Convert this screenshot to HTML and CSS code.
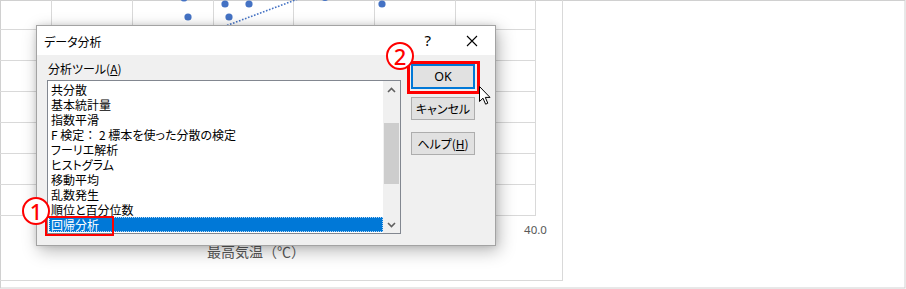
FILE: index.html
```html
<!DOCTYPE html>
<html lang="ja">
<head>
<meta charset="utf-8">
<title>データ分析</title>
<link rel="stylesheet" href="styles.css">
</head>
<body>
<div class="stage">
  <svg class="chart" width="906" height="289" viewBox="0 0 906 289">
    <rect x="0.5" y="0.5" width="904.5" height="287.5" fill="#fff" stroke="#d0d0d0"/>
    <g stroke="#d9d9d9" stroke-width="1">
      <line x1="562.5" y1="0" x2="562.5" y2="280.5"/>
      <line x1="0" y1="280.5" x2="563" y2="280.5"/>
      <line x1="0" y1="29.5" x2="536" y2="29.5"/>
      <line x1="0" y1="60.5" x2="536" y2="60.5"/>
      <line x1="0" y1="91.5" x2="536" y2="91.5"/>
      <line x1="0" y1="122.5" x2="536" y2="122.5"/>
      <line x1="0" y1="153.5" x2="536" y2="153.5"/>
      <line x1="0" y1="184.5" x2="536" y2="184.5"/>
      <line x1="0" y1="215.5" x2="536" y2="215.5"/>
      <line x1="51.5" y1="0" x2="51.5" y2="215"/>
      <line x1="132.5" y1="0" x2="132.5" y2="215"/>
      <line x1="213.5" y1="0" x2="213.5" y2="215"/>
      <line x1="293.5" y1="0" x2="293.5" y2="215"/>
      <line x1="374.5" y1="0" x2="374.5" y2="215"/>
      <line x1="455.5" y1="0" x2="455.5" y2="215"/>
      <line x1="535.5" y1="0" x2="535.5" y2="215"/>
    </g>
    <line x1="212" y1="31" x2="298" y2="-1" stroke="#4472c4" stroke-width="1.6" stroke-dasharray="1.6 1.6"/>
    <g fill="#4472c4">
      <circle cx="184" cy="-2" r="3.6"/>
      <circle cx="188" cy="17" r="3.6"/>
      <circle cx="225" cy="4" r="3.6"/>
      <circle cx="249" cy="4" r="3.6"/>
      <circle cx="229" cy="17" r="3.6"/>
      <circle cx="325" cy="-2.5" r="3.6"/>
      <circle cx="382" cy="4" r="3.6"/>
    </g>
    <text class="tick" x="535.5" y="234" text-anchor="middle">40.0</text>
    <text class="axis-title" x="207" y="257">最高気温（℃）</text>
  </svg>

  <div class="dialog">
    <div class="titlebar">
      <span class="title">データ分析</span>
      <span class="tb-buttons">
        <span class="tb-help">?</span>
        <svg class="tb-close" width="12" height="12" viewBox="0 0 12 12"><path d="M1 1L11 11M11 1L1 11" stroke="#000" stroke-width="1.1" fill="none"/></svg>
      </span>
    </div>
    <div class="body">
      <div class="left">
        <div class="label">分析ツール(<u>A</u>)</div>
        <div class="listbox">
          <ul class="items">
            <li>共分散</li>
            <li>基本統計量</li>
            <li>指数平滑</li>
            <li>F 検定<span class="fw">：</span> 2 標本を使った分散の検定</li>
            <li>フーリエ解析</li>
            <li>ヒストグラム</li>
            <li>移動平均</li>
            <li>乱数発生</li>
            <li>順位と百分位数</li>
            <li class="selected">回帰分析</li>
          </ul>
          <div class="scrollbar">
            <div class="sb-arrow"><svg width="9" height="6" viewBox="0 0 9 6"><path d="M1 5L4.5 1.5L8 5" stroke="#606060" stroke-width="1.6" fill="none"/></svg></div>
            <div class="sb-track"><div class="sb-thumb"></div></div>
            <div class="sb-arrow"><svg width="9" height="6" viewBox="0 0 9 6"><path d="M1 1L4.5 4.5L8 1" stroke="#606060" stroke-width="1.6" fill="none"/></svg></div>
          </div>
        </div>
      </div>
      <div class="right">
        <div class="btn btn-default">OK</div>
        <div class="btn btn-cancel">キャンセル</div>
        <div class="btn btn-help">ヘルプ(<u>H</u>)</div>
      </div>
    </div>
  </div>

  <div class="mark-box mark-ok"></div>
  <div class="mark-box mark-item"></div>
  <div class="badge badge-1">1</div>
  <div class="badge badge-2">2</div>
  <svg class="cursor" width="14" height="20" viewBox="0 0 14 20">
    <path d="M0.5 0.5L0.5 15.5L4 12.2L6.6 18.2L8.8 17.2L6.3 11.4L11 11.4Z" fill="#fff" stroke="#000" stroke-width="1" stroke-linejoin="miter"/>
  </svg>
</div>
</body>
</html>
```

FILE: styles.css
```css
* { box-sizing: border-box; }
html, body { margin: 0; padding: 0; background: #fff; }
body {
  font-family: "Noto Sans CJK JP", "Noto Sans", sans-serif;
  font-feature-settings: "palt";
}
.stage {
  position: relative;
  width: 906px;
  height: 289px;
  overflow: hidden;
}
.chart { display: block; }
.tick {
  font-family: "Noto Sans", "Liberation Sans", sans-serif;
  font-size: 11.5px;
  fill: #595959;
}
.axis-title {
  font-family: "Noto Sans CJK JP", sans-serif;
  font-feature-settings: normal;
  font-size: 14px;
  fill: #595959;
}
.fw { font-feature-settings: normal; }

.dialog {
  position: absolute;
  left: 36px;
  top: 25px;
  width: 460px;
  height: 221px;
  border: 1px solid #a3a3a3;
  background: #f0f0f0;
  box-shadow: 3px 5px 16px rgba(0,0,0,0.28), 0 0 6px rgba(0,0,0,0.12);
  display: flex;
  flex-direction: column;
  color: #000;
  font-size: 12px;
}
.titlebar {
  height: 29px;
  background: #fff;
  display: flex;
  align-items: center;
  justify-content: space-between;
  padding: 2px 0 0 7px;
  flex: none;
}
.title { font-size: 12px; line-height: 16px; }
.tb-buttons {
  display: flex;
  align-items: center;
  gap: 35px;
  padding-right: 17px;
}
.tb-help {
  font-family: "Noto Sans", sans-serif;
  font-size: 15px;
  line-height: 16px;
  margin-top: -4px;
}
.tb-close { display: block; margin-top: -2px; }

.body {
  flex: 1;
  display: flex;
  padding: 0 0 0 10px;
}
.left { display: flex; flex-direction: column; }
.label {
  padding: 6px 0 0 1px;
  line-height: 15px;
  height: 25px;
}
.label u, .btn u { text-underline-offset: 1px; }
.listbox {
  width: 354px;
  height: 154px;
  border: 1px solid #828790;
  background: #fff;
  display: flex;
}
.items {
  list-style: none;
  margin: 0;
  padding: 1px 0 0 1px;
  flex: 1;
}
.items li {
  height: 15px;
  line-height: 15px;
  padding-left: 2px;
  white-space: nowrap;
}
.items li.selected {
  background: #0078d7;
  color: #fff;
  outline: 1px dotted #b8d8f4;
  outline-offset: -1px;
}
.scrollbar {
  width: 17px;
  background: #f0f0f0;
  display: flex;
  flex-direction: column;
}
.sb-arrow {
  height: 17px;
  display: flex;
  align-items: center;
  justify-content: center;
  flex: none;
}
.sb-arrow svg { display: block; }
.sb-track { flex: 1; padding-top: 25px; }
.sb-thumb {
  height: 61px;
  margin: 0 1px;
  background: #cdcdcd;
}

.right {
  display: flex;
  flex-direction: column;
  padding: 9px 0 0 10px;
}
.btn {
  width: 64px;
  height: 23px;
  background: #e1e1e1;
  border: 1px solid #adadad;
  display: flex;
  align-items: center;
  justify-content: center;
  font-size: 12px;
  line-height: 15px;
}
.btn-default {
  height: 25px;
  border: 2px solid #0078d7;
  font-family: "Noto Sans", sans-serif;
  font-size: 12.5px;
}
.btn-cancel { margin-top: 8px; }
.btn-help { margin-top: 12px; }

.mark-box {
  position: absolute;
  border: 2px solid #ff0000;
}
.mark-ok { left: 407px; top: 61px; width: 73px; height: 33px; border-width: 3px; }
.mark-item { left: 45px; top: 216px; width: 69px; height: 20px; }

.badge {
  position: absolute;
  width: 28px;
  height: 28px;
  border: 2px solid #ff0000;
  border-radius: 50%;
  background: #fff;
  color: #ff0000;
  font-family: "Noto Sans", sans-serif;
  font-weight: 500;
  font-size: 22px;
  line-height: 24px;
  text-align: center;
}
.badge-1 { left: 22px; top: 197px; }
.badge-2 { left: 386px; top: 42px; }

.cursor {
  position: absolute;
  left: 479px;
  top: 86px;
}
```
